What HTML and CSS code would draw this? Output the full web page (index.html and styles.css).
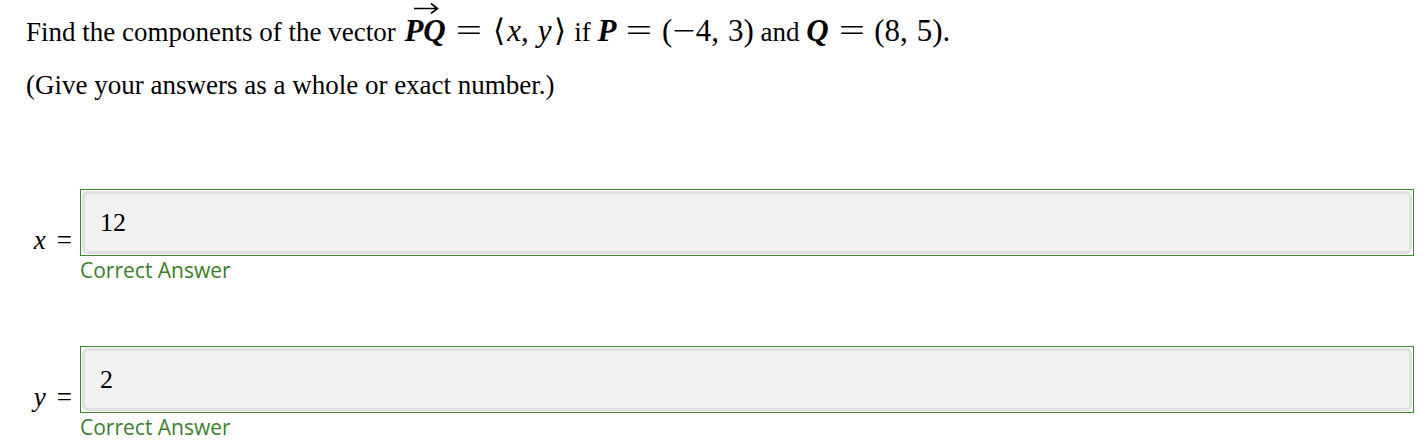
FILE: index.html
```html
<!DOCTYPE html>
<html>
<head>
<meta charset="utf-8">
<link rel="stylesheet" href="styles.css">
</head>
<body>
<div class="page">
  <p class="q">Find the components of the vector <span class="m vec"><svg class="arrow" width="26" height="12" viewBox="0 0 26 12"><path d="M1 6.5H24M18 1.5L24.5 6.5L18 11.5" fill="none" stroke="#000" stroke-width="1.6"/></svg><span class="bi">PQ</span></span><span class="m"><span class="eq">=</span><span class="ang">⟨</span><i>x</i>,<span class="thin"></span><i>y</i><span class="ang">⟩</span></span> if <span class="m"><span class="bi">P</span><span class="eq">=</span>(<span class="minus">−</span>4,<span class="thin"></span>3)</span> and <span class="m"><span class="bi">Q</span><span class="eq">=</span>(8,<span class="thin"></span>5).</span></p>
  <p class="hint">(Give your answers as a whole or exact number.)</p>

  <div class="answer first">
    <div class="row">
      <span class="label m"><i>x</i><span class="eq small">=</span></span>
      <div class="field"><div class="inner">12</div></div>
    </div>
    <div class="ok">Correct Answer</div>
  </div>

  <div class="answer second">
    <div class="row">
      <span class="label m"><i>y</i><span class="eq small">=</span></span>
      <div class="field"><div class="inner">2</div></div>
    </div>
    <div class="ok">Correct Answer</div>
  </div>
</div>
</body>
</html>
```
FILE: styles.css
```css
html, body { margin: 0; padding: 0; background: #fff; }
body { font-family: "Liberation Serif", "Times New Roman", serif; color: #000; }
.page { padding: 0 9px 0 26px; }
.q { margin: 0; padding-top: 14px; font-size: 27px; line-height: 34px; white-space: nowrap; }
.hint { margin: 0; padding-top: 19px; font-size: 27px; line-height: 34px; }
.m { font-family: "Liberation Serif", serif; font-size: 31px; }
.m i { font-style: italic; }
.bi { font-style: italic; font-weight: bold; }
.eq { display: inline-block; transform: scaleX(1.5); margin: 0 14px 0 14px; }
.ang { display: inline-block; margin: 0 2px; }
.thin { display: inline-block; width: 9px; }
.minus { display: inline-block; transform: scaleX(1.3); margin: 0 3px; }
.vec { position: relative; display: inline-block; margin-left: 2px; }
.arrow { position: absolute; left: 9px; top: -12px; }
.answer { display: flex; flex-direction: column; }
.first { margin-top: 87px; }
.second { margin-top: 62px; }
.row { display: flex; align-items: flex-end; }
.label { width: 46px; padding-right: 8px; text-align: right; font-size: 27px; line-height: 27px; padding-bottom: 2px; white-space: nowrap; }
.label .eq.small { transform: none; margin: 0 0 0 11px; }
.field { flex: 1; border: 1px solid #3d8a2a; padding: 1px; background: #fff; }
.inner { height: 57px; border: 3px solid #e0e0e0; border-radius: 6px; background: #f2f2f2; font-size: 26px; line-height: 57px; padding-left: 15px; }
.ok { margin-left: 54px; font-family: "Open Sans", "Noto Sans", sans-serif; font-size: 21px; line-height: 28px; color: #3a7f2a; }
```
